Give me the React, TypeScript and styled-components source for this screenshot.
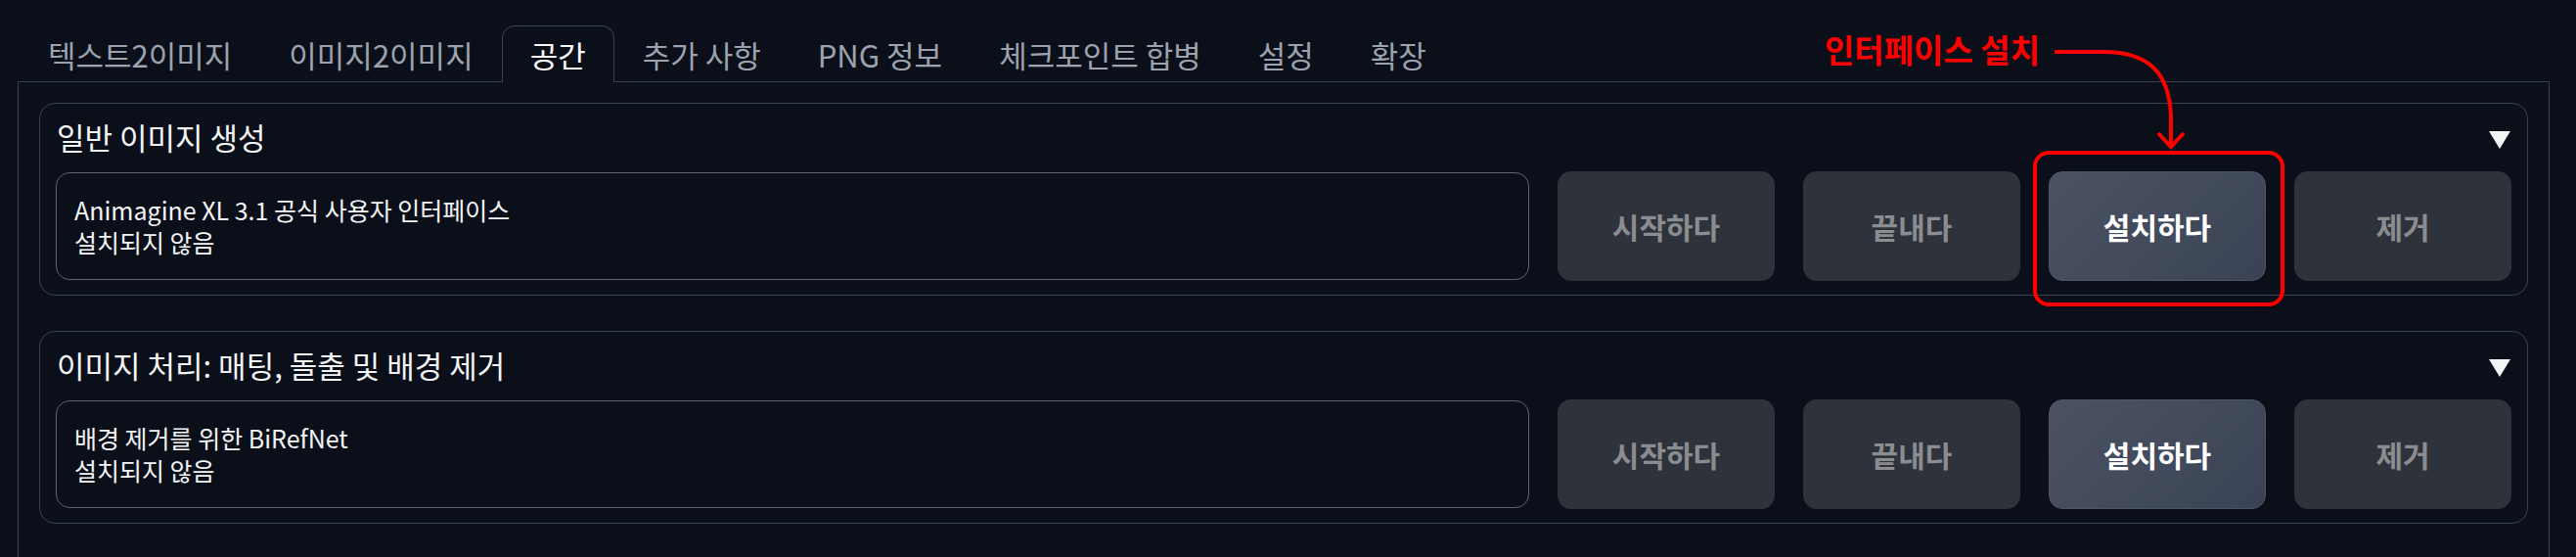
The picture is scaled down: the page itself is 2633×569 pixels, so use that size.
import React from 'react';
import styled, { createGlobalStyle } from 'styled-components';

const Global = createGlobalStyle`
  html, body { margin: 0; padding: 0; background: #0b0f19; overflow: hidden; }
  body { font-family: "Noto Sans CJK KR", "Noto Sans", sans-serif; }
`;

const Page = styled.div`
  position: relative;
  width: 2633px;
  height: 569px;
  box-sizing: border-box;
  padding: 26px 27px 0 18px;
  background: #0b0f19;
  overflow: hidden;
`;

const TabNav = styled.div`
  display: flex;
  gap: 0;
  padding-left: 2px;
  height: 57px;
  position: relative;
  z-index: 1;
`;

const Tab = styled.div<{ $active?: boolean }>`
  box-sizing: border-box;
  height: 58px;
  padding: 0 28px;
  display: flex;
  align-items: center;
  border: 1px solid ${(p) => (p.$active ? '#374151' : 'transparent')};
  border-bottom: none;
  border-radius: 13px 13px 0 0;
  background: ${(p) => (p.$active ? '#0b0f19' : 'transparent')};
  color: ${(p) => (p.$active ? '#f9fafb' : '#9ca3af')};
  font-size: 31px;
  line-height: 40px;
  white-space: nowrap;
`;

const Panel = styled.div`
  border: 1px solid #374151;
  padding: 21px 21px 60px;
  display: flex;
  flex-direction: column;
  gap: 36px;
`;

const Block = styled.div`
  border: 1px solid #374151;
  border-radius: 16px;
  padding: 14px 16px 14px;
  display: flex;
  flex-direction: column;
  gap: 15px;
`;

const TitleRow = styled.div`
  height: 40px;
  display: flex;
  align-items: center;
  justify-content: space-between;
`;

const Title = styled.span`
  font-size: 31px;
  line-height: 40px;
  color: #f3f4f6;
  padding-left: 1px;
`;

const Caret = styled.span`
  width: 0;
  height: 0;
  margin-top: 6px;
  margin-right: 1px;
  border-left: 11.5px solid transparent;
  border-right: 11.5px solid transparent;
  border-top: 18px solid #f3f4f6;
`;

const Row = styled.div`
  display: flex;
  align-items: center;
  gap: 29px;
  height: 112px;
`;

const InfoBox = styled.div`
  flex: 1;
  box-sizing: border-box;
  height: 110px;
  border: 1px solid #5f646c;
  border-radius: 14px;
  padding: 0 18px;
  display: flex;
  flex-direction: column;
  justify-content: center;
  font-size: 25px;
  line-height: 33px;
  color: #f3f4f6;
`;

const Button = styled.div<{ $primary?: boolean }>`
  box-sizing: border-box;
  width: 222px;
  height: 112px;
  border-radius: 14px;
  display: flex;
  align-items: center;
  justify-content: center;
  font-size: 30px;
  font-weight: 700;
  border: 1px solid ${(p) => (p.$primary ? '#4b5563' : 'transparent')};
  background: ${(p) =>
    p.$primary ? 'linear-gradient(135deg, #4b5362 0%, #3a4355 100%)' : '#2d323b'};
  color: ${(p) => (p.$primary ? '#ffffff' : '#8b8c90')};
`;

const Label = styled.div`
  position: absolute;
  left: 1865px;
  top: 30px;
  font-size: 33px;
  line-height: 40px;
  font-weight: 700;
  color: #ff0000;
  white-space: nowrap;
`;

const Highlight = styled.div`
  position: absolute;
  left: 2078px;
  top: 154px;
  width: 257px;
  height: 159px;
  box-sizing: border-box;
  border: 4px solid #ff0000;
  border-radius: 16px;
  pointer-events: none;
`;

const ArrowLayer = styled.svg`
  position: absolute;
  left: 0;
  top: 0;
  pointer-events: none;
`;

const tabs = ['텍스트2이미지', '이미지2이미지', '공간', '추가 사항', 'PNG 정보', '체크포인트 합병', '설정', '확장'];

const blocks = [
  { title: '일반 이미지 생성', name: 'Animagine XL 3.1 공식 사용자 인터페이스' },
  { title: '이미지 처리: 매팅, 돌출 및 배경 제거', name: '배경 제거를 위한 BiRefNet' },
];

export default function App() {
  return (
    <>
      <Global />
      <Page>
        <TabNav>
          {tabs.map((t) => (
            <Tab key={t} $active={t === '공간'}>
              {t}
            </Tab>
          ))}
        </TabNav>
        <Panel>
          {blocks.map((b) => (
            <Block key={b.title}>
              <TitleRow>
                <Title>{b.title}</Title>
                <Caret />
              </TitleRow>
              <Row>
                <InfoBox>
                  <div>{b.name}</div>
                  <div>설치되지 않음</div>
                </InfoBox>
                <Button>시작하다</Button>
                <Button>끝내다</Button>
                <Button $primary>설치하다</Button>
                <Button>제거</Button>
              </Row>
            </Block>
          ))}
        </Panel>
        <Label>인터페이스 설치</Label>
        <Highlight />
        <ArrowLayer width={2633} height={569} viewBox="0 0 2633 569">
          <path
            d="M2100 53 L2150 53 C2196 53 2217 74 2219 118 L2219 150"
            fill="none"
            stroke="#ff0000"
            strokeWidth={4}
          />
          <path d="M2206 136 L2219 150 L2232 136" fill="none" stroke="#ff0000" strokeWidth={4} />
        </ArrowLayer>
      </Page>
    </>
  );
}
